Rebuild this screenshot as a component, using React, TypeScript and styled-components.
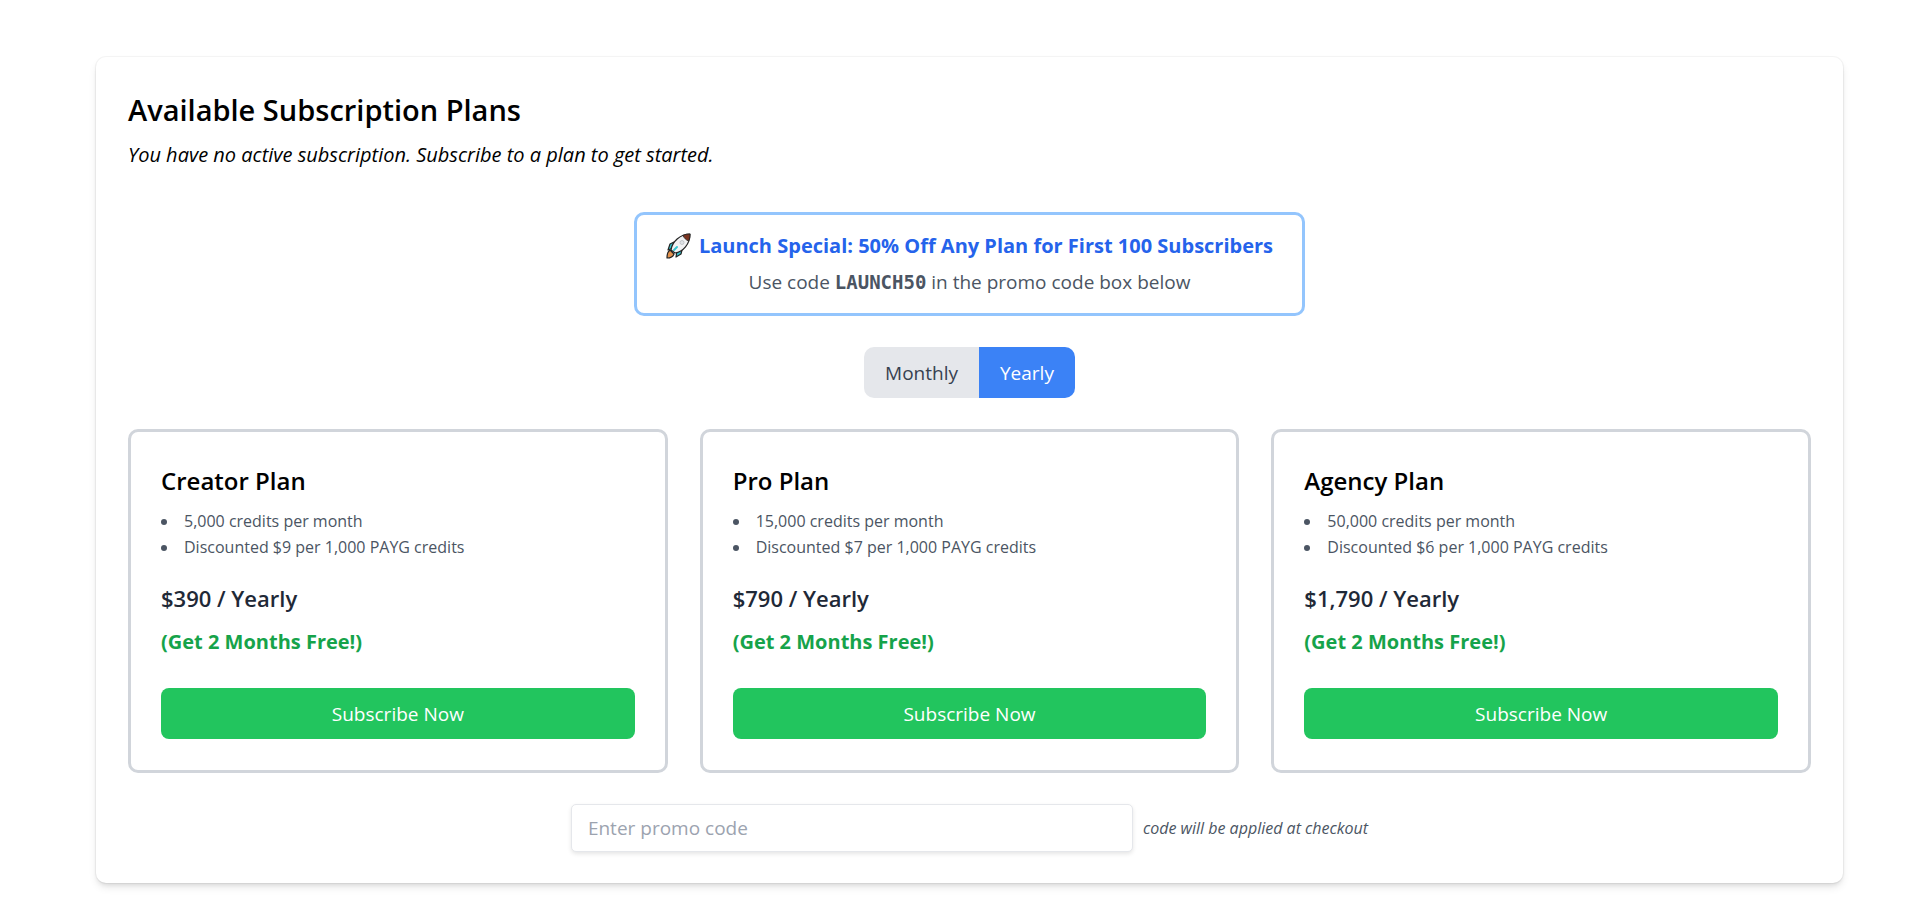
import React, { useState } from "react";
import styled, { createGlobalStyle } from "styled-components";

const GlobalStyle = createGlobalStyle`
  *, *::before, *::after { box-sizing: border-box; }
  body {
    margin: 0;
    background: #ffffff;
    color: #000000;
    font-family: "Open Sans", "Noto Sans", sans-serif;
    font-size: 19px;
    line-height: 32px;
  }
  h1, h2, p, ul { margin: 0; padding: 0; }
  button, input { font: inherit; }
`;

const Page = styled.main`
  padding: 57px 77px 38px 96px;
`;

const Panel = styled.section`
  display: flex;
  flex-direction: column;
  gap: 31px;
  padding: 31px 32px;
  background: #ffffff;
  border-radius: 10px;
  box-shadow: 0 0 0 1px rgba(0, 0, 0, 0.04), 0 5px 8px -1px rgba(0, 0, 0, 0.1),
    0 3px 5px -2px rgba(0, 0, 0, 0.1);
`;

const Heading = styled.h1`
  font-size: 29px;
  font-weight: 600;
  line-height: 44px;
  margin-bottom: 7px;
`;

const Status = styled.p`
  font-size: 20px;
  font-style: italic;
  margin-bottom: 10px;
`;

const Banner = styled.aside`
  align-self: center;
  display: flex;
  flex-direction: column;
  gap: 4px;
  padding: 15px 29px;
  border: 3px solid #93c5fd;
  border-radius: 10px;
  text-align: center;
`;

const BannerTitle = styled.p`
  display: flex;
  align-items: center;
  gap: 8px;
  color: #2563eb;
  font-size: 20px;
  font-weight: 700;
`;

const BannerText = styled.p`
  color: #4b5563;
`;

const PromoCode = styled.code`
  font-family: "DejaVu Sans Mono", "Liberation Mono", monospace;
  font-weight: 700;
`;

const Toggle = styled.div`
  align-self: center;
  display: flex;
  border-radius: 10px;
  overflow: hidden;
`;

const ToggleButton = styled.button<{ $active: boolean }>`
  height: 51px;
  padding: 0 21px;
  border: 0;
  cursor: pointer;
  background: ${(p) => (p.$active ? "#3b82f6" : "#e5e7eb")};
  color: ${(p) => (p.$active ? "#ffffff" : "#374151")};
`;

const Plans = styled.div`
  display: grid;
  grid-template-columns: repeat(3, minmax(0, 1fr));
  gap: 32px;
`;

const PlanCard = styled.article`
  display: flex;
  flex-direction: column;
  padding: 30px 30px 31px;
  border: 3px solid #d1d5db;
  border-radius: 10px;
`;

const PlanName = styled.h2`
  font-size: 24px;
  font-weight: 600;
  line-height: 38px;
  margin-bottom: 8px;
`;

const Features = styled.ul`
  list-style: disc inside;
  color: #4b5563;
  font-size: 16px;
  line-height: 26px;
  margin-bottom: 20px;
`;

const Price = styled.p`
  color: #1f2937;
  font-size: 22px;
  font-weight: 600;
  line-height: 36px;
  margin-bottom: 10px;
`;

const Offer = styled.p`
  color: #16a34a;
  font-size: 20px;
  font-weight: 700;
  margin-bottom: 30px;
`;

const SubscribeButton = styled.button`
  height: 51px;
  border: 0;
  border-radius: 8px;
  background: #22c55e;
  color: #ffffff;
  cursor: pointer;
`;

const PromoRow = styled.div`
  align-self: center;
  display: flex;
  align-items: center;
  gap: 10px;
`;

const PromoInput = styled.input`
  width: 562px;
  height: 48px;
  padding: 0 16px;
  border: 1px solid #e5e7eb;
  border-radius: 5px;
  background: #ffffff;
  box-shadow: 0 2px 4px rgba(0, 0, 0, 0.1);
  &::placeholder { color: #9ca3af; opacity: 1; }
`;

const PromoNote = styled.label`
  color: #4b5563;
  font-size: 16px;
  font-style: italic;
`;

const Rocket = () => (
  <svg width="25" height="26" viewBox="0 0 25 26" aria-hidden="true">
    <path d="M8 9 L4 11 L2 17 L7 15 Z" fill="#35c5d0" stroke="#242424" strokeWidth="1.2" strokeLinejoin="round" />
    <path d="M16 17 L15 21 L10 24 L11 18 Z" fill="#35c5d0" stroke="#242424" strokeWidth="1.2" strokeLinejoin="round" />
    <path d="M4 17 C1 19 1 22 1 25 C4 25 7 24 8 21 Z" fill="#e2924e" stroke="#242424" strokeWidth="1.2" strokeLinejoin="round" />
    <path d="M5 17 C6 9 14 1 24 1 C24 11 17 19 9 20 Z" fill="#f1f1f3" stroke="#242424" strokeWidth="1.2" strokeLinejoin="round" />
    <path d="M17 2.500 C19 1.500 21 1 24 1 C24 4 23.500 6 22.500 8 C20 7 18 5 17 2.500 Z" fill="#7a3420" stroke="#242424" strokeWidth="0.8" strokeLinejoin="round" />
    <circle cx="16" cy="9.500" r="2" fill="#dfe2e6" stroke="#b9bcc2" strokeWidth="0.8" />
    <path d="M8 17 L11 14" stroke="#35c5d0" strokeWidth="2" strokeLinecap="round" />
  </svg>
);

type Cycle = "Monthly" | "Yearly";

const cycles: Cycle[] = ["Monthly", "Yearly"];

const plans = [
  { name: "Creator Plan", credits: "5,000", rate: 9, Monthly: "$39", Yearly: "$390" },
  { name: "Pro Plan", credits: "15,000", rate: 7, Monthly: "$79", Yearly: "$790" },
  { name: "Agency Plan", credits: "50,000", rate: 6, Monthly: "$179", Yearly: "$1,790" },
];

export default function App() {
  const [cycle, setCycle] = useState<Cycle>("Yearly");

  return (
    <>
      <GlobalStyle />
      <Page>
        <Panel>
          <header>
            <Heading>Available Subscription Plans</Heading>
            <Status>You have no active subscription. Subscribe to a plan to get started.</Status>
          </header>
          <Banner>
            <BannerTitle>
              <Rocket />
              Launch Special: 50% Off Any Plan for First 100 Subscribers
            </BannerTitle>
            <BannerText>
              Use code <PromoCode>LAUNCH50</PromoCode> in the promo code box below
            </BannerText>
          </Banner>
          <Toggle role="group" aria-label="Billing cycle">
            {cycles.map((c) => (
              <ToggleButton
                key={c}
                type="button"
                $active={c === cycle}
                aria-pressed={c === cycle}
                onClick={() => setCycle(c)}
              >
                {c}
              </ToggleButton>
            ))}
          </Toggle>
          <Plans>
            {plans.map((plan) => (
              <PlanCard key={plan.name}>
                <PlanName>{plan.name}</PlanName>
                <Features>
                  <li>{plan.credits} credits per month</li>
                  <li>Discounted ${plan.rate} per 1,000 PAYG credits</li>
                </Features>
                <Price>
                  {plan[cycle]} / {cycle}
                </Price>
                {cycle === "Yearly" && <Offer>(Get 2 Months Free!)</Offer>}
                <SubscribeButton type="button">Subscribe Now</SubscribeButton>
              </PlanCard>
            ))}
          </Plans>
          <PromoRow>
            <PromoInput id="promo" type="text" placeholder="Enter promo code" />
            <PromoNote htmlFor="promo">code will be applied at checkout</PromoNote>
          </PromoRow>
        </Panel>
      </Page>
    </>
  );
}
